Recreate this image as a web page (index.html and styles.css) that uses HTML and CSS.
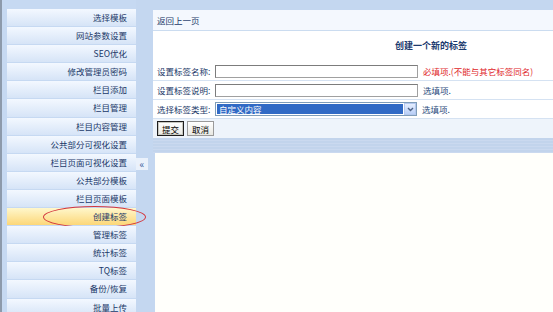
FILE: index.html
```html
<!DOCTYPE html>
<html lang="zh-CN">
<head>
    <meta charset="UTF-8">
    <meta name="viewport" content="width=device-width, initial-scale=1.0">
    <title>创建标签</title>
    <link rel="stylesheet" href="styles.css">
</head>
<body>
    <div class="page">
        <aside class="sidebar">
            <ul class="menu">
                <li>选择模板</li>
                <li>网站参数设置</li>
                <li>SEO优化</li>
                <li>修改管理员密码</li>
                <li>栏目添加</li>
                <li>栏目管理</li>
                <li>栏目内容管理</li>
                <li>公共部分可视化设置</li>
                <li>栏目页面可视化设置</li>
                <li>公共部分模板</li>
                <li>栏目页面模板</li>
                <li class="active">创建标签<span class="mark"></span></li>
                <li>管理标签</li>
                <li>统计标签</li>
                <li>TQ标签</li>
                <li>备份/恢复</li>
                <li>批量上传</li>
            </ul>
        </aside>

        <div class="splitter"><span class="toggle">&laquo;</span></div>

        <main class="main">
            <div class="panel">
                <div class="panel-head"><a href="#">返回上一页</a></div>
                <h2 class="title">创建一个新的标签</h2>
                <form class="tag-form">
                    <div class="row">
                        <label for="tagName">设置标签名称:</label>
                        <input type="text" id="tagName">
                        <span class="hint required">必填项.(不能与其它标签同名)</span>
                    </div>
                    <div class="row">
                        <label for="tagDesc">设置标签说明:</label>
                        <input type="text" id="tagDesc">
                        <span class="hint">选填项.</span>
                    </div>
                    <div class="row">
                        <label>选择标签类型:</label>
                        <div class="select">
                            <span class="selected">自定义内容</span>
                            <span class="arrow">
                                <svg width="7" height="5" viewBox="0 0 7 5"><path d="M1 1 L3.5 3.5 L6 1" fill="none" stroke="#4d6185" stroke-width="1.4"/></svg>
                            </span>
                        </div>
                        <span class="hint">选填项.</span>
                    </div>
                    <div class="actions">
                        <button type="submit" class="primary">提交</button>
                        <button type="button">取消</button>
                    </div>
                </form>
            </div>
            <div class="band"></div>
            <div class="frame"></div>
        </main>
    </div>
</body>
</html>
```

FILE: styles.css
```css
html, body {
    margin: 0;
    padding: 0;
    height: 100%;
    overflow: hidden;
}
body {
    font-family: "Noto Sans CJK SC", "DejaVu Sans", sans-serif;
    font-size: 8.5px;
    color: #1a3868;
    background: #c4d7f0;
}
.page {
    display: flex;
    height: 312px;
}
.sidebar {
    width: 136px;
    flex-shrink: 0;
    box-sizing: border-box;
    border-left: 2px solid #8d9aab;
    padding: 9px 0 0 5px;
    background: #c6d9f2;
}
.menu {
    list-style: none;
    margin: 0;
    padding: 0;
}
.menu li {
    position: relative;
    height: 17.1px;
    line-height: 17px;
    margin-bottom: 1px;
    padding-right: 9px;
    text-align: right;
    white-space: nowrap;
    background: linear-gradient(#f3f8ff, #d6e4f7);
}
.menu li.active {
    background: linear-gradient(#fff7cc, #fcd778);
}
.mark {
    position: absolute;
    left: 36px;
    top: -2px;
    width: 103px;
    height: 22px;
    box-sizing: border-box;
    border: 1px solid #d3373d;
    border-radius: 50%;
}
.splitter {
    width: 17px;
    flex-shrink: 0;
    padding-top: 158px;
    box-sizing: border-box;
}
.toggle {
    display: block;
    width: 12px;
    height: 12px;
    line-height: 11px;
    text-align: center;
    font-size: 10px;
    color: #3a5f9e;
    background: #eaf1fb;
}
.main {
    flex: 1;
    min-width: 0;
    padding-top: 10px;
    display: flex;
    flex-direction: column;
}
.panel {
    background: #fff;
}
.panel-head {
    height: 20px;
    line-height: 20px;
    padding-left: 4px;
    background: #f4f8fe;
    border-bottom: 1px solid #cbdcf0;
}
.panel-head a {
    color: #1a3868;
    text-decoration: none;
}
.title {
    margin: 0;
    height: 31px;
    line-height: 29px;
    padding-left: 242px;
    font-size: 9px;
    font-weight: bold;
    color: #1b3a6e;
}
.row {
    display: flex;
    align-items: center;
    height: 18px;
    padding-left: 4px;
    border-bottom: 1px solid #d5e2f2;
    white-space: nowrap;
}
.row label {
    width: 58px;
    flex-shrink: 0;
}
.row input {
    width: 203px;
    height: 13px;
    margin: 0;
    padding: 0;
    box-sizing: border-box;
    border: 1px solid #a0a0a0;
    border-top-color: #7c7c7c;
    border-left-color: #7c7c7c;
    background: #fff;
}
.hint {
    margin-left: 5px;
    color: #2a4a7c;
}
.hint.required {
    color: #e0262a;
}
.select {
    display: flex;
    width: 202px;
    height: 14px;
    box-sizing: border-box;
    border: 1px solid #7f9db9;
    background: #fff;
}
.selected {
    flex: 1;
    margin: 1px;
    padding-left: 2px;
    line-height: 10px;
    color: #fff;
    background: #316ac5;
}
.arrow {
    width: 12px;
    display: flex;
    align-items: center;
    justify-content: center;
    box-sizing: border-box;
    border: 1px solid #b4c8ef;
    background: linear-gradient(#e6eefe, #b9cff7);
}
.actions {
    display: flex;
    gap: 3px;
    align-items: center;
    height: 19px;
    padding-left: 4px;
    background: #eef4fb;
}
.actions button {
    width: 27px;
    height: 15px;
    padding: 0;
    font-family: inherit;
    font-size: 8.5px;
    color: #000;
    border: 1px solid #9a9a9a;
    background: linear-gradient(#fff, #e8e8e2);
}
.actions button.primary {
    border: 1px solid #1e1e1e;
    box-shadow: inset 0 0 0 1px #c8c8c0;
}
.band {
    height: 15px;
    background: repeating-linear-gradient(#c2d4ec 0, #c2d4ec 2px, #cad9ef 2px, #cad9ef 3px);
}
.frame {
    flex: 1;
    margin-left: 2px;
    background: #fffffb;
}
```
